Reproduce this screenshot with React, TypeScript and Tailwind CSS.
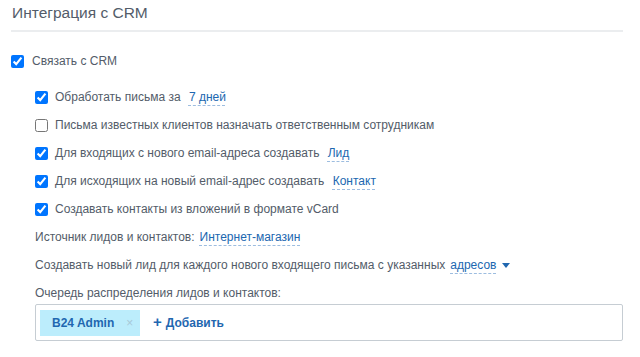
import React from "react";

const font = { fontFamily: '"Liberation Sans", Arial, sans-serif' };

function Link({ children }: { children: React.ReactNode }) {
  return (
    <span className="ml-[5px] text-[#2067b0] underline decoration-dashed decoration-[#9dbde0] underline-offset-[4px]">
      {children}
    </span>
  );
}

function Check({ checked }: { checked: boolean }) {
  return (
    <input
      type="checkbox"
      defaultChecked={checked}
      className="m-0 h-[13px] w-[13px] shrink-0"
    />
  );
}

function SubRow({ checked, children }: { checked: boolean; children: React.ReactNode }) {
  return (
    <div className="flex h-[28px] items-center">
      <Check checked={checked} />
      <span className="ml-[7px]">{children}</span>
    </div>
  );
}

export default function App() {
  return (
    <div
      className="h-[357px] w-[640px] overflow-hidden bg-white text-[12px] text-[#535c69]"
      style={font}
    >
      <div className="ml-[11px] mr-[17px] h-[32px] border-b-2 border-[#ebedef] pl-[1px] pt-[1px]">
        <div className="text-[15.5px] leading-[24px] text-[#535c69]">Интеграция с CRM</div>
      </div>

      <div className="ml-[11px] mt-[15px] flex h-[28px] items-center">
        <Check checked />
        <span className="ml-[8px]">Связать с CRM</span>
      </div>

      <div className="ml-[35px] mr-[17px] mt-[8px] flex flex-col">
        <SubRow checked>
          Обработать письма за <Link>7 дней</Link>
        </SubRow>
        <SubRow checked={false}>
          Письма известных клиентов назначать ответственным сотрудникам
        </SubRow>
        <SubRow checked>
          Для входящих с нового email-адреса создавать <Link>Лид</Link>
        </SubRow>
        <SubRow checked>
          Для исходящих на новый email-адрес создавать <Link>Контакт</Link>
        </SubRow>
        <SubRow checked>Создавать контакты из вложений в формате vCard</SubRow>
        <div className="flex h-[28px] items-center">
          Источник лидов и контактов: <Link>Интернет-магазин</Link>
        </div>
        <div className="flex h-[28px] items-center">
          Создавать новый лид для каждого нового входящего письма с указанных
          <Link>адресов</Link>
          <svg width="8" height="5" viewBox="0 0 8 5" className="ml-[6px]">
            <path d="M0 0 L8 0 L4 5 Z" fill="#2067b0" />
          </svg>
        </div>
        <div className="mt-[3px] flex h-[22px] items-center">
          Очередь распределения лидов и контактов:
        </div>
        <div className="flex h-[37px] items-center rounded-[2px] border border-[#c6cdd3] px-[4px]">
          <div className="flex h-[26px] w-[100px] items-center bg-[#bcedfc] pl-[12px]">
            <span className="font-bold text-[#1f67b0]">B24 Admin</span>
            <span className="ml-[12px] text-[12px] text-[#a8c9d8]">×</span>
          </div>
          <span className="ml-[13px] font-bold text-[#1f67b0]">
            <span className="mr-[4px] text-[15px]">+</span>Добавить
          </span>
        </div>
      </div>
    </div>
  );
}
